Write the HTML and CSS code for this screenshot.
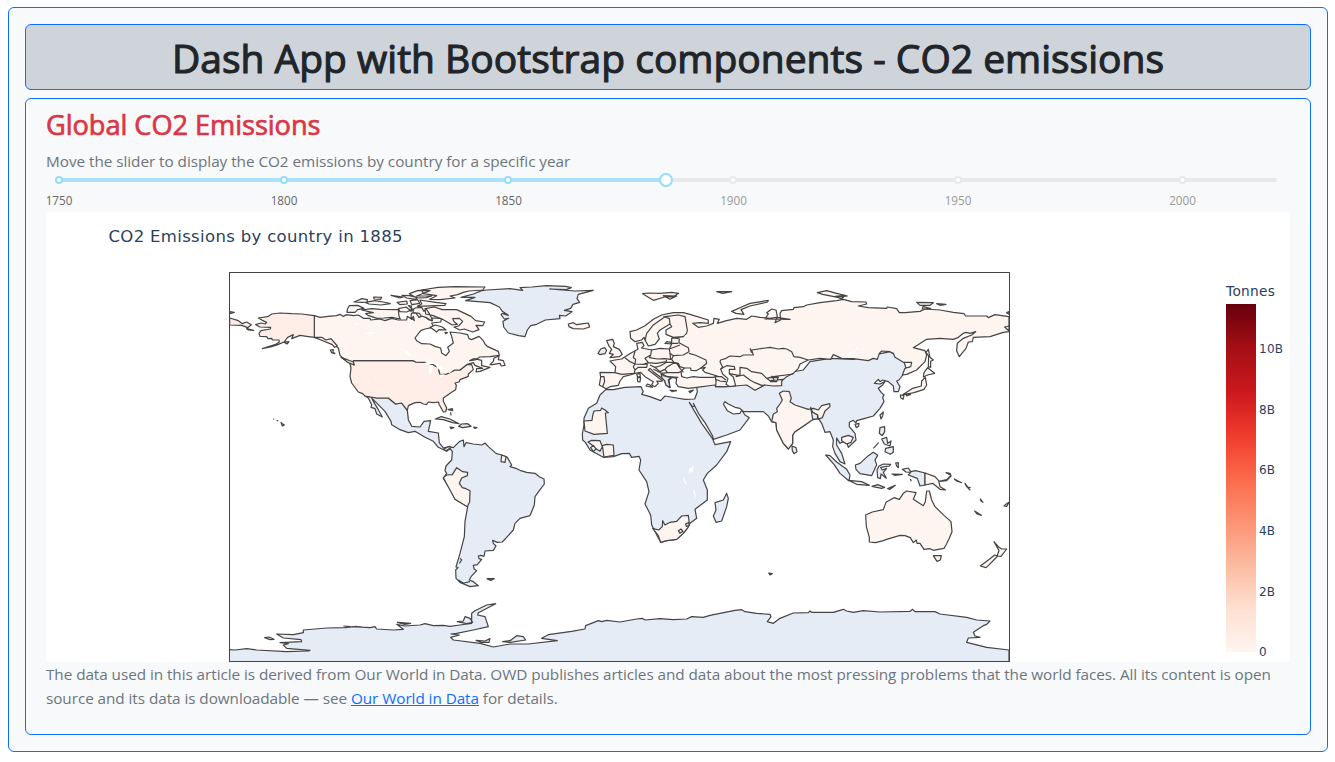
FILE: index.html
```html
<!DOCTYPE html>
<html lang="en">
<head>
<meta charset="utf-8">
<title>Dash App with Bootstrap components</title>
<link rel="stylesheet" href="styles.css">
</head>
<body>
<main class="app">
  <header class="banner"><h1>Dash App with Bootstrap components - CO2 emissions</h1></header>
  <section class="panel">
    <h3 class="heading">Global CO2 Emissions</h3>
    <p class="hint">Move the slider to display the CO2 emissions by country for a specific year</p>
    <svg class="slider" viewBox="46 172 1244 40">
      <rect x="59" y="178" width="1218" height="4" rx="2" fill="#e9e9e9"/>
      <rect x="59" y="178" width="607" height="4" rx="2" fill="#abe2fb"/>
      <g fill="#fff" stroke="#96dbfa" stroke-width="2"><circle cx="59" cy="180" r="3"/><circle cx="284" cy="180" r="3"/><circle cx="508" cy="180" r="3"/><circle cx="666" cy="180" r="6"/></g>
      <g fill="#fff" stroke="#e9e9e9" stroke-width="2"><circle cx="733" cy="180" r="3"/><circle cx="958" cy="180" r="3"/><circle cx="1182.500" cy="180" r="3"/></g>
      <g class="marks"><text x="59" y="205">1750</text><text x="284" y="205">1800</text><text x="508.500" y="205">1850</text>
      <g class="off"><text x="733.500" y="205">1900</text><text x="958" y="205">1950</text><text x="1182.500" y="205">2000</text></g></g>
    </svg>
    <svg class="plot" viewBox="46 212 1244 450">
      <defs>
        <linearGradient id="reds" x1="0" y1="1" x2="0" y2="0">
          <stop offset="0" stop-color="#fff5f0"/><stop offset=".125" stop-color="#fee0d2"/><stop offset=".25" stop-color="#fcbba1"/><stop offset=".375" stop-color="#fc9272"/><stop offset=".5" stop-color="#fb6a4a"/><stop offset=".625" stop-color="#ef3b2c"/><stop offset=".75" stop-color="#cb181d"/><stop offset=".875" stop-color="#a50f15"/><stop offset="1" stop-color="#67000d"/>
        </linearGradient>
        <clipPath id="frame"><rect x="229" y="272" width="781" height="390"/></clipPath>
      </defs>
      <rect x="46" y="212" width="1244" height="450" fill="#fff"/>
      <text class="plot-title" x="108.500" y="242" textLength="294">CO2 Emissions by country in 1885</text>
      <g clip-path="url(#frame)" class="map">
        <!-- North America -->
        <g transform="translate(225 268) scale(.33333)">
          <path class="none" d="M420 384L455 390L490 390L500 398L512 408L530 405L547 427L550 455L560 475L585 477L597 460L617 458L610 490L640 495L643 525L655 540L675 535L685 545L690 550L675 542L665 550L640 538L625 520L600 508L570 490L550 494L525 485L500 470L498 460L480 430L450 400L440 390L445 400L460 425L472 447L455 438L450 422L438 418L440 410L430 390Z"/>
          <path class="usa" d="M378 278L565 278L572 282L600 283L625 290L640 300L645 320L665 318L690 306L705 306L725 290L740 290L745 305L730 318L730 325L705 335L702 342L690 345L694 352L692 365L680 373L655 390L655 400L665 420L662 431L655 432L643 410L640 402L625 404L610 402L605 409L595 408L585 403L570 404L550 413L547 427L530 405L512 408L500 398L490 390L455 390L420 384L413 377L400 372L380 345L375 325L378 300L374 284L385 290Z"/>
          <path d="M268 143L285 148L310 145L335 143L345 139L354 145L365 140L385 143L400 141L415 151L435 151L437 156L465 153L480 158L500 151L520 156L545 156L547 145L560 154L565 145L568 158L558 148L559 136L572 134L582 148L595 142L610 155L622 157L620 150L650 151L647 162L620 165L625 175L620 179L600 183L587 188L570 210L575 218L590 227L615 228L630 235L647 240L650 255L663 263L673 250L668 238L685 225L680 205L675 192L705 195L728 200L732 212L740 215L762 205L775 218L780 228L787 235L820 250L823 262L795 266L765 267L750 276L734 278L748 272L770 277L770 293L795 298L765 310L753 312L755 302L773 301L750 292L745 284L725 290L705 306L690 306L665 318L645 320L640 300L625 290L600 283L572 282L565 278L385 278L385 285L355 271L345 262L340 240L325 228L290 213L268 208Z"/>
          <path class="usa" d="M268 143L230 138L200 137L165 135L140 138L128 146L100 150L112 157L125 163L121 168L108 165L92 170L105 177L137 178L136 183L108 188L102 196L105 205L125 206L129 212L140 211L142 216L162 216L163 222L150 230L112 242L140 236L160 229L177 222L188 208L205 200L200 212L225 202L245 205L268 208L290 208L303 216L318 212L337 234L329 238L322 230L288 216L268 208ZM176 222L192 221L186 228ZM14 150L40 158L52 167L65 162L79 170L68 179L50 172L14 171ZM14 131L28 133L14 137ZM65 182L86 187L70 186Z"/>
          <path d="M795 290L805 280L807 270L822 264L820 275L835 278L840 292L829 294L825 286L802 290ZM316 246L325 245L324 252L330 257L320 254ZM348 268L385 282L388 291L370 284ZM373 113L398 112L417 121L398 125L390 133L366 133L367 124ZM387 102L411 92L427 95L426 102L410 103ZM421 103L450 98L474 102L496 107L468 111L432 108ZM410 126L440 122L466 124L520 125L522 144L526 153L501 148L477 150L456 151L429 142L422 137L445 134ZM498 82L535 87L525 90ZM446 87L470 88L467 94L447 93ZM516 103L545 99L547 108L525 110ZM520 122L543 117L556 127L545 132L525 131ZM555 98L578 95L584 106L561 110ZM531 82L553 83L576 88L572 94L545 90ZM553 77L580 67L615 68L590 78L575 84L620 84L604 89L575 90ZM590 66L639 58L690 56L780 57L773 66L732 69L715 73L698 80L675 84L690 90L645 95L614 94L635 83L595 77ZM585 96L632 103L663 107L659 112L577 115L590 108ZM550 113L560 114L558 130L570 120L590 118L597 130L604 123L613 137L620 150L621 159L605 149L589 144L583 136L564 134L565 126ZM600 122L628 117L652 125L695 125L738 145L752 158L779 162L773 173L753 172L762 185L743 192L718 183L704 186L687 177L701 174L713 160L703 151L683 152L688 162L697 169L682 171L655 155L622 142L602 138ZM615 178L631 171L652 177L663 186L642 185L635 192L622 182ZM660 193L667 194L662 197Z"/>
          <path class="none" d="M708 88L745 78L770 68L785 66L855 62L893 67L885 59L920 57L965 53L1022 55L1039 59L1024 65L974 63L1050 69L1105 67L1060 79L1056 92L1064 103L1044 109L1037 121L1018 127L1041 131L1022 144L1003 142L1005 152L961 156L935 169L917 173L907 186L900 206L881 203L850 195L836 177L834 160L851 151L838 153L828 140L832 136L850 142L832 130L823 117L795 104L722 98L750 88Z"/>
          <path d="M1030 168L1045 164L1055 170L1075 167L1090 165L1094 177L1075 183L1045 182L1032 176Z"/>
          <path class="none" d="M631 453L649 446L675 453L702 467L683 464L655 455ZM710 468L728 467L738 475L713 479L701 475ZM675 477L686 479L678 482ZM746 477L756 479L749 481ZM669 425L682 422L683 428ZM677 434L678 441ZM145 453L148 454M155 457L160 459M168 463L170 466L178 471L172 474Z"/>
        </g>
        <!-- South America, Antarctica -->
        <g transform="translate(420 430) scale(.33333)">
          <path class="none" d="M70 58L85 50L100 53L118 35L130 30L132 50L138 38L160 42L185 45L195 39L205 50L228 70L245 75L262 82L275 105L270 110L290 116L300 121L320 127L345 130L358 140L372 147L373 162L358 182L345 200L343 225L330 257L300 265L285 280L280 300L262 320L247 336L232 337L218 331L220 340L228 348L220 361L195 363L192 379L182 376L175 378L177 386L185 388L172 404L160 406L162 416L170 422L153 440L148 450L160 455L175 467L150 470L120 457L108 445L107 420L114 412L108 411L120 370L133 320L135 275L143 230L130 222L105 208L95 185L70 145L80 130L75 122L78 108L95 90L97 65L90 55L78 62ZM115 450L130 459L150 455M120 385L125 390L118 400M201 446L223 446L212 451Z"/>
          <path d="M70 143L80 135L97 134L110 113L128 125L143 127L142 137L125 144L118 160L127 173L138 176L150 182L149 215L142 230L105 208ZM245 75L258 80L255 97L243 95Z"/>
          <path class="none" d="M-585 658L-555 660L-520 656L-490 660L-400 665L-335 663L-330 661L-400 655L-410 645L-395 641L-420 638L-355 635L-357 629L-410 624L-430 612L-380 614L-350 608L-350 600L-280 594L-225 593L-200 590L-150 593L-135 590L-130 597L-80 600L-50 598L-70 583L-45 588L0 585L15 581L40 587L70 586L90 589L120 585L155 580L155 550L165 542L200 525L227 521L175 548L173 555L195 560L205 590L160 600L110 610L93 612L118 615L92 622L100 630L180 640L220 651L270 642L325 642L412 632L365 625L385 614L455 604L495 597L497 587L520 578L535 572L545 575L560 571L600 576L650 567L667 565L675 570L720 566L760 569L800 567L815 560L850 562L870 556L945 541L965 539L975 545L1010 550L1050 553L1053 560L1042 575L1060 580L1078 566L1120 549L1165 548L1170 543L1175 547L1240 547L1270 538L1280 543L1300 547L1330 542L1380 546L1470 544L1478 538L1485 545L1545 545L1560 552L1640 562L1670 570L1710 573L1700 583L1690 587L1660 607L1665 618L1680 622L1645 624L1640 637L1700 652L1767 660L1767 695L-585 695ZM112 575L130 573L135 560L150 565L158 577L140 581ZM168 631L195 633L210 626L207 637L185 637ZM248 635L270 632L290 617L310 620L317 630L270 637ZM-466 623L-453 621L-438 628L-450 629ZM-230 588L-208 590M-195 589L-172 591M-68 577L-28 580L-45 583Z"/>
        </g>
        <!-- Africa, Europe, Asia -->
        <g transform="translate(570 280) scale(.33333)">
          <path class="none" d="M108 328L130 329L165 322L213 320L220 335L215 343L240 350L272 362L285 348L320 354L345 358L374 357L382 336L380 320L440 308L500 310L530 300L700 270L720 245L780 235L850 238L960 215L1000 240L1010 270L987 300L980 303L990 320L985 335L972 335L970 318L955 305L938 300L930 305L925 298L913 310L930 312L945 305L938 315L925 325L934 338L942 345L938 352L942 365L930 385L910 408L885 415L860 422L858 429L850 421L838 427L838 440L855 460L858 480L835 502L832 492L820 485L810 490L800 474L800 495L815 520L825 552L810 545L795 520L788 500L790 480L780 455L765 457L755 430L745 415L725 420L705 435L675 455L668 465L668 490L655 507L640 490L620 450L618 428L605 425L595 408L580 395L520 394L510 385L495 382L475 372L465 365L460 372L472 392L490 402L510 400L515 390L525 405L538 413L510 450L470 465L430 478L428 468L405 428L385 400L370 370L375 380L366 378L358 367L395 430L427 475L435 494L482 485L470 515L440 555L412 580L400 600L412 630L412 660L375 688L380 715L360 730L355 740L340 760L320 778L290 782L272 787L263 770L245 735L242 705L225 672L237 635L230 605L207 570L212 540L207 529L185 532L178 520L155 521L130 530L100 532L60 510L46 487L38 480L37 462L42 435L42 415L55 385L80 370L90 345Z"/>
          <path d="M42 423L66 421L68 406L72 393L92 391L95 384L105 390L115 398L106 399L112 460L72 463L45 453ZM54 486L65 481L90 482L97 500L90 514L76 505L67 496ZM97 497L110 493L130 495L132 526L102 531ZM248 745L266 750L277 740L278 722L285 735L300 727L320 724L335 708L355 706L358 730L353 744L340 760L320 778L290 782L272 787L265 767Z"/>
          <path class="none" d="M325 752L333 747L339 754L330 760ZM347 732L356 728L358 737L349 739ZM62 503L70 496L78 507L70 515ZM470 640L475 655L470 680L455 723L438 727L430 708L438 690L435 668L460 660Z"/>
          <path d="M180 155L200 150L225 137L250 118L275 105L310 98L340 98L360 103L415 120L415 130L390 128L368 130L385 142L410 138L430 130L432 115L448 118L442 130L470 122L500 115L530 118L545 108L570 112L600 115L620 112L660 118L585 117L595 102L590 98L605 87L618 90L622 110L615 128L632 120L630 100L635 92L670 88L672 83L700 80L710 75L750 68L800 62L820 58L845 65L888 66L890 72L865 78L895 83L950 85L952 81L980 86L988 98L1005 98L1050 94L1065 87L1110 90L1150 97L1182 101L1187 108L1250 108L1255 113L1275 104L1317 110L1317 155L1300 157L1260 170L1210 172L1207 185L1195 186L1188 205L1168 230L1160 212L1162 190L1180 175L1205 165L1217 155L1200 160L1188 157L1180 160L1165 172L1150 178L1110 175L1070 178L1030 203L1065 212L1070 225L1065 245L1040 270L1010 283L997 285L1005 265L1022 260L1025 247L1000 247L975 232L970 220L960 215L935 213L928 220L922 238L910 235L895 242L850 236L815 235L790 224L782 238L750 235L715 240L690 252L685 265L670 280L650 290L635 303L635 317L610 318L585 315L555 331L530 315L495 318L470 320L437 320L435 315L380 322L355 325L325 320L318 310L320 295L307 292L297 300L300 323L288 315L283 300L270 290L250 275L240 265L235 270L255 285L278 303L270 304L260 303L265 310L255 320L245 315L250 305L225 290L212 277L195 280L180 285L160 290L150 303L145 316L120 320L108 326L88 315L92 292L90 277L135 278L137 260L120 243L135 240L155 237L178 222L190 215L204 208L200 190L217 187L222 197L215 204L245 210L270 205L298 207L305 192L285 190L290 185L305 187L305 175L340 170L310 172L288 163L288 150L305 140L300 132L270 150L262 160L268 177L255 193L235 198L228 185L222 172L215 180L195 185L182 175Z"/>
          <path class="sea" d="M335 290L333 275L343 264L362 264L363 271L378 272L392 265L406 262L398 270L405 277L442 288L430 292L390 292L370 290L350 294ZM452 267L470 257L493 260L495 268L478 268L478 281L490 291L497 317L480 320L468 313L474 296L458 282Z"/>
          <path class="none" d="M273 280L280 287L303 292L295 300L300 323L288 315L284 302L276 294Z"/>
          <path class="line" d="M225 182L230 160L250 135L285 110L325 105L345 110L352 150L350 160L340 170M300 132L298 115L280 110M310 172L328 177L327 188L355 203L357 215L340 225L310 227L300 220L298 207L330 195M300 190L325 190M245 208L242 225L238 233L262 237L285 236L302 238L300 220M242 225L225 235L235 248L220 253L195 252L197 238L190 233L195 213M135 278L155 283L192 280L195 270L190 260L195 252L180 245L165 233M195 270L205 262L230 262L232 252L220 253M90 290L102 290L104 304L98 320M232 248L260 250L288 245L290 240M240 255L255 262L270 258L290 247L310 247L320 250L330 265L340 277M255 262L270 275L285 268L292 278L325 278L333 275M285 268L290 262L310 250L325 250M310 227L305 238L312 247L325 250L330 260L343 264M250 267L265 275L275 280L290 290L325 292M275 280L292 278M357 220L375 225L408 240L410 250L392 265M435 285L438 305L437 320L470 320M438 290L455 290L468 300M435 297L450 303L468 305M452 267L458 262L450 245L452 240L468 235L480 228L510 230L520 225L550 225L545 210L600 202L625 207L640 205L650 207L665 215L672 230L690 232L715 240M545 218L540 205M478 281L510 287L510 262L530 265L545 275L575 280L590 295L610 290L670 282M497 290L520 285L540 300L555 308L575 316L585 315M590 295L600 302L640 298M595 293L625 292L620 305L600 305M605 287L612 300"/>
          <path d="M110 182L128 178L133 190L130 200L148 208L157 223L148 230L120 233L130 223L118 220L125 208L118 200ZM200 282L210 281L211 289L203 292ZM202 293L212 292L210 306L203 305ZM240 315L232 312L228 318L248 322ZM218 41L235 39L270 40L305 37L326 40L309 51L284 51L250 61L230 49ZM280 47L320 48L300 58ZM440 35L485 35L458 40ZM485 94L515 81L540 70L595 61L593 66L540 78L513 89L522 103L498 100ZM742 38L770 32L800 40L832 48L803 52L758 43ZM796 49L825 46L815 57ZM1040 67L1090 68L1080 76L1050 76ZM1100 71L1128 73L1110 76ZM1059 79L1082 86L1057 87ZM1310 98L1317 95L1317 103ZM1317 138L1304 141L1317 153Z"/>
          <path class="none" d="M84 220L92 207L104 203L110 211L105 221L90 224ZM300 331L320 332L306 335ZM357 334L370 330L360 338ZM666 498L678 503L681 515L672 521L667 512ZM930 405L940 396L938 408L933 417ZM855 433L867 430L866 439L859 443ZM930 443L944 440L944 455L937 467L928 460ZM910 505L926 488M935 477L950 472L953 490L963 483L960 498L943 492ZM947 505L970 500L970 517L961 523L945 515Z"/>
          <path d="M605 425L610 402L622 395L620 385L630 372L637 360L628 340L640 333L658 335L664 355L660 365L675 375L715 388L730 385L745 390L755 377L779 371L780 380L765 393L757 413L745 418L743 405L728 397L730 418L705 435L675 455L668 465L668 490L655 507L640 490L620 450L618 428ZM815 472L835 466L850 472L843 487L830 492L815 482ZM1075 208L1080 232L1090 240L1082 244L1082 262L1075 260L1076 228L1068 217ZM1073 263L1094 280L1073 285L1060 291L1062 278ZM1066 292L1070 315L1062 328L1032 338L1011 342L997 345L1028 325L1054 318L1055 303ZM991 345L1002 347L999 358L992 353ZM1008 342L1022 343L1010 348Z"/>
          <path class="none" d="M722 382L728 397L743 405L742 417L728 417Z"/>
          <path class="lake" d="M357 567L370 558L368 575L357 578ZM339 588L347 605L353 618L342 607ZM370 625L376 640L378 655L371 640ZM372 158L384 155L380 163ZM343 167L354 163L349 171ZM830 222L856 210L861 200L864 208L840 224Z"/>
        </g>
        <!-- Oceania -->
        <g transform="translate(740 430) scale(.33333)">
          <path class="none" d="M257 75L270 77L290 96L320 118L330 135L327 153L300 130L282 103ZM325 151L365 155L388 166L350 163ZM346 105L360 100L385 77L400 67L413 76L405 90L410 104L395 137L360 131L348 118ZM417 108L430 102L452 103L448 108L422 112L427 120L440 115L430 127L439 145L423 132L421 146L413 143L411 120ZM396 169L413 164L434 172L425 175ZM443 176L466 166L450 178ZM456 132L487 133L465 136ZM467 99L475 98L475 113L470 108ZM487 118L505 114L512 125L527 122L555 129L555 165L540 168L532 145L505 135L512 127L498 126ZM511 147L514 154"/>
          <path d="M555 129L585 140L596 152L600 170L617 180L600 178L578 160L555 165ZM597 154L620 149L633 136L618 128L630 130L633 138L620 152ZM643 147L665 158L650 153ZM675 160L690 180L680 170ZM680 171L692 173M721 207L729 217L723 213ZM704 243L724 256L710 251ZM792 228L800 221L807 217L800 229ZM377 255L397 246L430 239L438 217L462 203L478 208L490 190L500 183L528 188L520 208L550 227L556 215L560 183L568 183L575 210L585 230L612 256L633 275L636 305L628 325L618 345L612 355L595 358L580 361L570 356L552 358L540 340L531 340L529 330L520 338L511 323L495 317L480 316L440 328L430 332L407 338L388 336L388 322L379 290ZM580 377L604 377L601 390L591 394ZM762 335L775 350L785 357L800 357L783 379L771 378L777 362ZM764 375L773 378L748 404L738 413L721 408L748 388Z"/>
          <path class="none" d="M86 429L97 431L90 435Z"/>
        </g>
        <!-- Great Lakes and northern lakes -->
        <g class="lake" transform="translate(225 268) scale(.33333)">
          <path d="M384 164L412 169L392 171ZM417 195L455 191L437 199ZM535 245L550 250L560 266L548 262ZM595 286L615 280L632 286L605 291ZM614 295L625 292L617 322L612 312ZM632 288L655 300L648 308L635 300ZM642 320L660 318L646 329ZM667 312L682 308L674 315ZM450 326L457 327L452 331Z"/>
        </g>
      </g>
      <rect x="229.500" y="272.500" width="780" height="389" class="map-frame"/>
      <text class="legend-title" x="1226" y="296" textLength="49">Tonnes</text>
      <rect x="1226" y="304" width="30" height="348" fill="url(#reds)"/>
      <g class="ticks"><text x="1259" y="353" textLength="24">10B</text><text x="1259" y="414" textLength="16">8B</text><text x="1259" y="474" textLength="16">6B</text><text x="1259" y="535" textLength="16">4B</text><text x="1259" y="596" textLength="16">2B</text><text x="1259" y="656">0</text></g>
    </svg>
    <p class="credit">The data used in this article is derived from Our World in Data. OWD publishes articles and data about the most pressing problems that the world faces. All its content is open<br>source and its data is downloadable — see <a href="#">Our World in Data</a> for details.</p>
  </section>
</main>
</body>
</html>
```
FILE: styles.css
```css
* { box-sizing: border-box; }
body { margin: 0; background: #fff; font: 16px/24px "Open Sans", "Noto Sans", sans-serif; color: #212529; }
h1, h3, p { margin: 0; white-space: nowrap; }
.app { margin: 7px 7px 0 8px; height: 745px; padding: 16px; border: 1px solid #0d6efd; border-radius: 6px; background: #f8f9fa; }
.banner { height: 66px; padding: 8px 0 0; border: 1px solid #0d6efd; border-radius: 6px; background: #ced4da; text-align: center; }
h1 { font-size: 39px; line-height: 50px; font-weight: 500; -webkit-text-stroke: 1.1px #212529; }
.panel { margin-top: 8px; height: 637px; padding: 9px 20px 0; border: 1px solid #0d6efd; border-radius: 6px; }
.heading { font-size: 27.2px; line-height: 34px; height: 34px; font-weight: 500; color: #dc3545; letter-spacing: -.05px; -webkit-text-stroke: .7px #dc3545; }
.hint { height: 30px; padding-top: 7px; color: #6c757d; font-size: 15.3px; letter-spacing: -.04px; }
.slider { display: block; width: 1244px; height: 40px; }
.marks { font-size: 11.700px; text-anchor: middle; fill: #666; }
.marks .off { fill: #999; }
.plot { display: block; width: 1244px; height: 450px; font-family: "DejaVu Sans", sans-serif; fill: #2a3f5f; }
.plot-title { font-size: 16.500px; }
.legend-title { font-size: 13.700px; }
.ticks { font-size: 12px; }
.map path { fill: #fff5f0; stroke: #444; stroke-width: 3.6px; stroke-linejoin: round; }
.map .none { fill: #e5ecf6; }
.map .usa { fill: #ffeee7; }
.map .sea { fill: #fff; }
.map .line { fill: none; }
.map .lake, .map .lake path { fill: #fff; stroke: none; }
.map-frame { fill: none; stroke: #444; }
.credit { color: #6c757d; font-size: 15.3px; letter-spacing: -.06px; }
.credit a { color: #0d6efd; }
```
